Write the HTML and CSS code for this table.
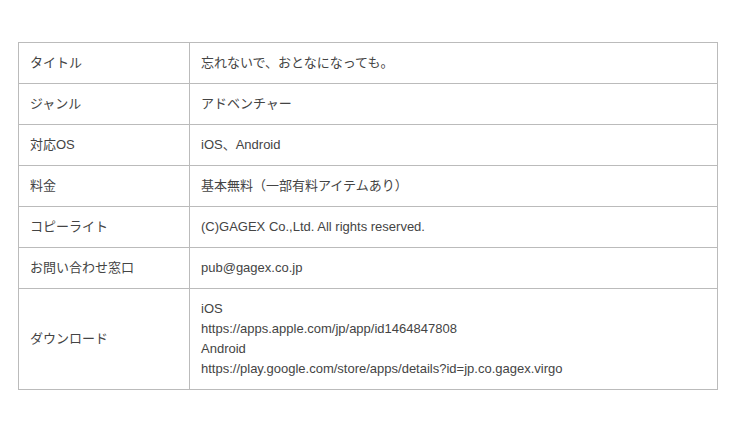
FILE: index.html
```html
<!DOCTYPE html>
<html lang="ja">
<head>
  <meta charset="UTF-8">
  <title>忘れないで、おとなになっても。</title>
  <link rel="stylesheet" href="styles.css">
</head>
<body>
  <div class="container">
    <table class="info">
      <tr>
        <th>タイトル</th>
        <td>忘れないで、おとなになっても。</td>
      </tr>
      <tr>
        <th>ジャンル</th>
        <td>アドベンチャー</td>
      </tr>
      <tr>
        <th>対応OS</th>
        <td>iOS、Android</td>
      </tr>
      <tr>
        <th>料金</th>
        <td>基本無料（一部有料アイテムあり）</td>
      </tr>
      <tr>
        <th>コピーライト</th>
        <td>(C)GAGEX Co.,Ltd. All rights reserved.</td>
      </tr>
      <tr>
        <th>お問い合わせ窓口</th>
        <td>pub@gagex.co.jp</td>
      </tr>
      <tr>
        <th>ダウンロード</th>
        <td>iOS<br>https://apps.apple.com/jp/app/id1464847808<br>Android<br>https://play.google.com/store/apps/details?id=jp.co.gagex.virgo</td>
      </tr>
    </table>
  </div>
</body>
</html>
```
FILE: styles.css
```css
body {
  margin: 0;
  font-family: 'Liberation Sans', 'Noto Sans CJK JP', sans-serif;
  font-size: 13px;
  line-height: 20px;
  color: #444;
  background: #fff;
}

.container {
  padding: 42px 18px;
}

.info {
  width: 700px;
  border-collapse: collapse;
}

.info th,
.info td {
  border: 1px solid #bbb;
  padding: 10px 11px;
  text-align: left;
  font-weight: normal;
  vertical-align: middle;
}

.info th {
  width: 148px;
}
```
